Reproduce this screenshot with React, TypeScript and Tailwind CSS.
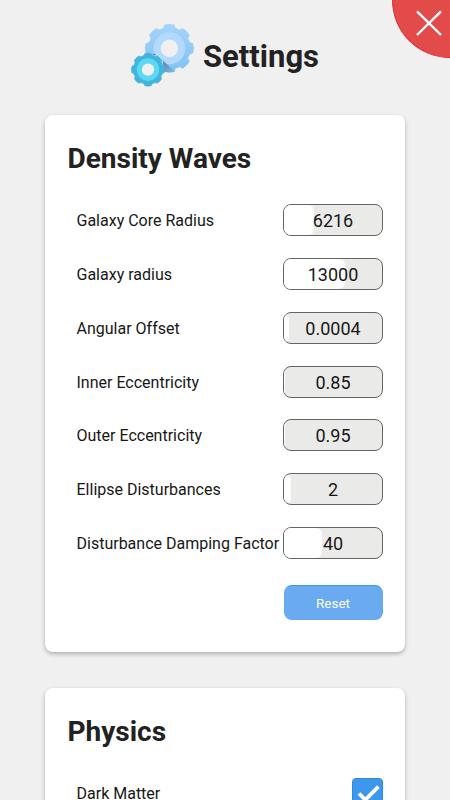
import React from 'react';

interface Parameter {
  label: string;
  value: string;
  fill: number;
}

const DENSITY_WAVES: Parameter[] = [
  { label: 'Galaxy Core Radius', value: '6216', fill: 31 },
  { label: 'Galaxy radius', value: '13000', fill: 63 },
  { label: 'Angular Offset', value: '0.0004', fill: 6 },
  { label: 'Inner Eccentricity', value: '0.85', fill: 2 },
  { label: 'Outer Eccentricity', value: '0.95', fill: 2 },
  { label: 'Ellipse Disturbances', value: '2', fill: 8 },
  { label: 'Disturbance Damping Factor', value: '40', fill: 39 },
];

// Outline of an eight-toothed gear centred on (cx, cy)
const gearPath = (cx: number, cy: number, outer: number, root: number) => {
  const points: string[] = [];
  for (let i = 0; i < 8; i++) {
    const steps: [number, number][] = [[-16, root], [-11.5, outer], [0, outer * 1.01], [11.5, outer], [16, root]];
    steps.forEach(([offset, radius]) => {
      const angle = ((i * 45 + offset) * Math.PI) / 180;
      points.push(`${(cx + radius * Math.sin(angle)).toFixed(2)} ${(cy - radius * Math.cos(angle)).toFixed(2)}`);
    });
  }
  return `M${points.join('L')}Z`;
};

const GearsIcon: React.FC = () => (
  <svg width="66" height="66" viewBox="0 0 66 66" className="shrink-0">
    <defs>
      <linearGradient id="large" x1="0" y1="0" x2="0" y2="1">
        <stop offset="0" stopColor="#a6d3fc" />
        <stop offset="1" stopColor="#7fc2f2" />
      </linearGradient>
      <linearGradient id="shade" x1="0" y1="0" x2="1" y2="1">
        <stop offset="0" stopColor="#4f7596" stopOpacity="0.9" />
        <stop offset="1" stopColor="#7aaee0" stopOpacity="0.6" />
      </linearGradient>
    </defs>
    <path d={gearPath(39.4, 26.3, 23.7, 20.8)} fill="url(#large)" stroke="url(#large)" strokeWidth="1" strokeLinejoin="round" />
    <circle cx="39.4" cy="26.3" r="16" fill="#b3d9fe" />
    <circle cx="39.4" cy="26.3" r="8.7" fill="#f0f0f0" />
    <path d="M33 38.5L45 50L34 50Z" fill="url(#shade)" />
    <path d="M23 31.5L26 32.5L24 33.5Z" fill="#52728d" />
    <path d={gearPath(18, 47.6, 16.4, 14.7)} fill="#43b4db" stroke="#43b4db" strokeWidth="0.7" strokeLinejoin="round" />
    <circle cx="18" cy="47.6" r="11.3" fill="#5bd9f3" />
    <circle cx="18" cy="47.6" r="6.2" fill="#f0f0f0" />
  </svg>
);

const CloseButton: React.FC = () => (
  <button aria-label="Close" className="absolute top-0 right-0 h-[58px] w-[58px] rounded-bl-full border-b border-l border-[#df3032] bg-[#e34b4b]">
    <svg width="58" height="58" viewBox="0 0 58 58" className="absolute top-0 right-0" fill="none" stroke="#fff" strokeWidth="2.4">
      <path d="M25 11.3L49 35M49 11.3L25 35" />
    </svg>
  </button>
);

const ParameterRow: React.FC<{ item: Parameter }> = ({ item }) => (
  <div className="flex h-[53.75px] items-center justify-between pl-[9px]">
    <span className="pt-[2px] text-[16px] whitespace-nowrap text-[#171717]">{item.label}</span>
    <div className="relative h-8 w-[100px] shrink-0 overflow-hidden rounded-lg border border-[#646464] bg-[#eaeae9]">
      <div className="h-full rounded-r-md bg-white" style={{ width: `${item.fill}%` }} />
      <span className="absolute inset-0 flex items-center justify-center pt-[1px] pl-[1px] text-[18px] text-[#171717]">{item.value}</span>
    </div>
  </div>
);

const Card: React.FC<{ title: string; children: React.ReactNode }> = ({ title, children }) => (
  <section className="rounded-lg bg-white px-[22.5px] pt-6 shadow-[0_2px_4px_rgba(0,0,0,0.28)]">
    <h2 className="h-[55px] text-[28px] leading-10 font-bold text-[#222]">{title}</h2>
    {children}
  </section>
);

const App: React.FC = () => (
  <div className="relative h-[800px] w-[450px] overflow-hidden bg-[#f0f0f0] font-['Roboto',sans-serif]">
    <header className="flex h-[114.5px] items-start pt-[22px] pl-[130px]">
      <GearsIcon />
      <h1 className="ml-[7px] text-[31px] leading-[70px] font-bold text-[#222]">Settings</h1>
    </header>
    <CloseButton />
    <main className="flex flex-col gap-9 px-[45px]">
      <Card title="Density Waves">
        {DENSITY_WAVES.map((item) => (
          <ParameterRow key={item.label} item={item} />
        ))}
        <div className="flex h-[82px] items-start justify-end pt-[15px]">
          <button className="h-[35px] w-[99px] rounded-lg border border-t-[#3d98ec] border-[#63a8f0] bg-[#69aaf0] pt-px text-[13.5px] text-white">
            Reset
          </button>
        </div>
      </Card>
      <Card title="Physics">
        <div className="flex h-[54px] items-center justify-between pl-[9px]">
          <span className="text-[16px] leading-[18px] text-[#171717]">Dark Matter</span>
          <div className="h-[31px] w-[31px] rounded border border-[#2a8ae0] bg-[#3d97ea]">
            <svg width="29" height="29" viewBox="0 0 29 29" fill="none" stroke="#fff" strokeWidth="3.8">
              <path d="M6 14.5L12.3 20.8L25.4 7.7" />
            </svg>
          </div>
        </div>
      </Card>
    </main>
  </div>
);

export default App;
